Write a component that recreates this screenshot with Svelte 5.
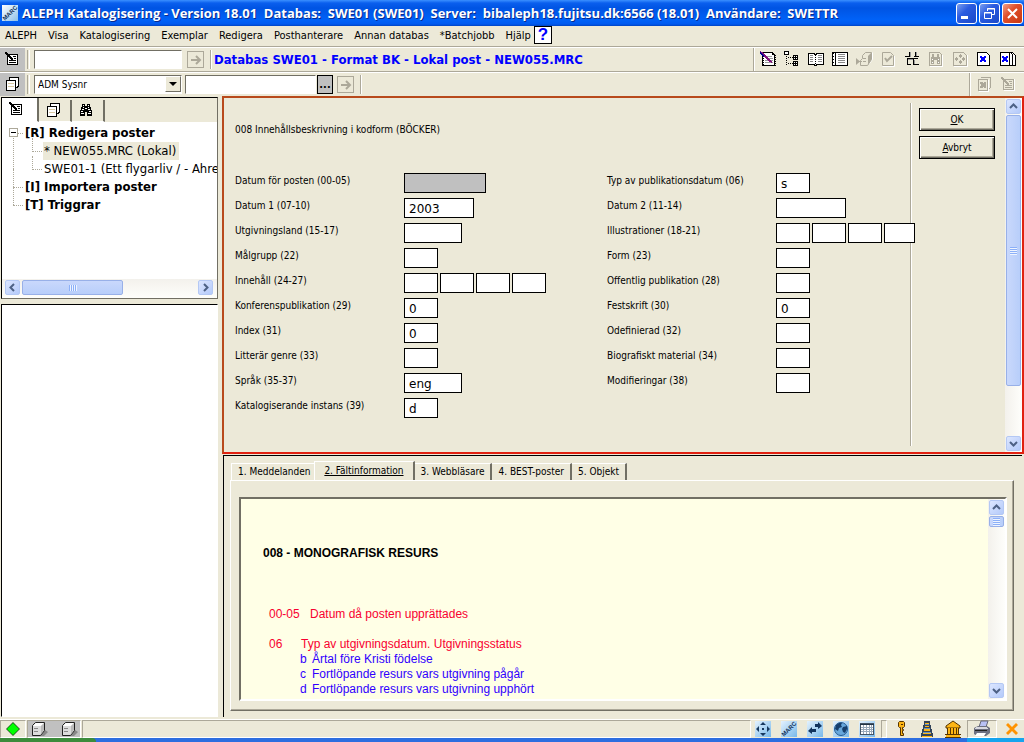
<script>
  const menus = ['ALEPH', 'Visa', 'Katalogisering', 'Exemplar', 'Redigera', 'Posthanterare', 'Annan databas', '*Batchjobb', 'Hjälp'];

  // Inner markup of the 18x18 toolbar and status icons
  const icons = {
    edit: `<path d="M4.5 4.5h10v10h-10z" fill="#fff" stroke="#000"/><path d="M2 2h2v1h1v1h1v1h1v1h1v1h1v1h1v2h-2v-1h-1v-1h-1v-1h-1v-1h-1v-1h-1v-1h-1v-1h-1z" fill="#000"/><path d="M10 6.500h3M11 8.500h2M6 10.500h7M6 12.500h7" stroke="#000"/>`,
    pages: `<path d="M6.5 5.5v-3h9v9h-1v1h-2" fill="#fff" stroke="#000"/><path d="M3.5 5.5h9v10h-9z" fill="#fff" stroke="#000"/><path d="M5 8.500h6M5 11.500h6" stroke="#d8c8a0"/>`,
    find: `<path d="M5 3h3v2h2V3h3v3h1v3h1v6h-5v-4H8v4H3V9h1V6h1z" fill="#000"/><path d="M6 4.500h1M11 4.500h1M6 6.500h1M11 6.500h1M5 8.500h2M11 8.500h2M8 7.500h2M4 10.500h2M12 10.500h2M4 12.500h3M11 12.500h3" stroke="#fff"/>`,
    editRed: `<path d="M3.5 2.5h10l2 2v11h-12z" fill="#fff" stroke="#000"/><path d="M3.5 2v14M15.5 5v11" stroke="#000" stroke-width="2" stroke-dasharray="1 1"/><path d="M13 3h2v2h-2z" fill="#000"/><path d="M8 6.500h5M9 8.500h5M6 10.500h8M6 12.500h8" stroke="#999"/><path d="M1 1.500l12 11" stroke="#80107c" stroke-width="2"/><path d="M1 2.500l4 4" stroke="#000090"/>`,
    tree: `<path d="M1.500 1.500h4v3h-4z" fill="#fff" stroke="#000"/><path d="M3.500 6v9M5 7.500h5M5 13.500h5" stroke="#000" stroke-dasharray="1 1" fill="none"/><path d="M10 5h5v5h-5zM10 11h5v5h-5z" fill="#000"/><path d="M11 6.500h1M13 6.500h1M11 8.500h1M13 8.500h1M11 12.500h1M13 12.500h1M11 14.500h1M13 14.500h1" stroke="#fff"/>`,
    book: `<path d="M1.500 3.500h5l2 1 2-1h6v11h-6l-2 1-2-1h-5z" fill="#fff" stroke="#000"/><path d="M8.500 5v11" stroke="#000" stroke-dasharray="1 1"/><path d="M3 5.500h3M3 7.500h3M3 9.500h3M3 11.500h3M11 5.500h4M11 7.500h4M11 9.500h4M11 11.500h4" stroke="#888"/>`,
    note: `<path d="M1.500 2.500h15v13h-15z" fill="#fff" stroke="#000"/><path d="M4.500 3v12" stroke="#000"/><path d="M2.500 3v12" stroke="#000" stroke-dasharray="1 2"/><path d="M7 4.500h7M7 6.500h7M7 8.500h7M7 10.500h7M7 12.500h7" stroke="#888"/>`,
    send: `<path d="M13.500 14.500l4-5v-7" stroke="#fff" fill="none"/><path d="M7.500 5.500l3-3h6v7l-4 6h-7v-5l2-2z" fill="#ece9d8" stroke="#aca899"/><path d="M13 6l3-3v7l-3 5z" fill="#aca899"/><path d="M8 8.500h3M8 11.500h3M2 11.500h5" stroke="#aca899"/><path d="M1 8l4 3.500-4 3.500z" fill="#aca899"/>`,
    check: `<path d="M3.500 2.500h8l3 3v10h-11z" fill="none" stroke="#aca899"/><path d="M15.500 6v10.500h-12" fill="none" stroke="#fff"/><path d="M6 8l2 3 5-5" fill="none" stroke="#aca899" stroke-width="2"/>`,
    split: `<path d="M6 2h1v5H6zM12 2h1v4h3v1h-5V6h1zM2 6h5v1H2zM4 8h11v1H5v6H4zM10 9h1v6h-1zM4 14h4v1H4zM10 14h6v1h-6z" fill="#000"/><path d="M7.500 2v5M5 9.500h5M13.500 2v4M11.500 10v4" stroke="#999"/>`,
    findDoc: `<path d="M2.500 2.500h10l2 2v11h-12z" fill="none" stroke="#aca899"/><path d="M15.500 5v11.500h-13" fill="none" stroke="#fff"/><path d="M5 4h2v3h3V4h2v3h1v7h-3v-4H7v4H4V7h1z" fill="#aca899"/><path d="M5 9.500h1M11 9.500h1M5 12.500h1M11 12.500h1" stroke="#fff"/>`,
    movDoc: `<path d="M2.500 2.500h10l3 3v10h-13z" fill="none" stroke="#aca899"/><path d="M16.500 5v11.500h-14" fill="none" stroke="#fff"/><path d="M9 4l2 2-2 2-2-2zM9 10l2 2-2 2-2-2zM5.500 7l2 2-2 2-2-2zM12.500 7l2 2-2 2-2-2z" fill="#aca899"/>`,
    close: `<path d="M2.500 2.500h9l3 3v10h-12z" fill="#fff" stroke="#000"/><path d="M5 6h2v1h2V6h2v2h-1v2h1v2H9v-1H7v1H5v-2h1V8H5z" fill="#00f"/>`,
    closeAll: `<path d="M7.500 2.500h6l3 3v10h-9z" fill="#fff" stroke="#000"/><path d="M4.500 2.500h7l2 2v11h-9z" fill="#fff" stroke="#000"/><path d="M1.500 2.500h8l1 1v12h-9z" fill="#fff" stroke="#000"/><path d="M3 6h2v1h2V6h2v2H8v2h1v2H7v-1H5v1H3v-2h1V8H3z" fill="#00f"/>`,
    closeGrey: `<path d="M6 2.500h9.500v10l-3 3M3.500 4.500h9v11h-9z" fill="none" stroke="#aca899"/><path d="M5 7h2l1 1 1-1h2v2l-1 1 1 1v2H9l-1-1-1 1H5v-2l1-1-1-1z" fill="#aca899"/><path d="M13.500 5v11.500h-10" stroke="#fff" fill="none"/>`,
    editGrey: `<path d="M4.500 4.500h10v10h-10z" fill="none" stroke="#aca899"/><path d="M15.500 4v11.500h-11" fill="none" stroke="#fff"/><path d="M2 2h2v1h1v1h1v1h1v1h1v1h1v1h1v2h-2v-1h-1v-1h-1v-1h-1v-1h-1v-1h-1v-1h-1v-1h-1z" fill="#aca899"/><path d="M10 6.500h3M11 8.500h2M6 10.500h7M6 12.500h7" stroke="#aca899"/>`,
    diamond: `<path d="M9 2l7 7-7 7-7-7z" fill="#205020"/><path d="M9 3l6 6-6 6-6-6z" fill="#0f0"/>`,
    cube: `<path d="M10 16h4l4-4-3-2z" fill="#888"/><path d="M2.500 5.500l3-3h9v8l-4 5h-8z" fill="#ddd" stroke="#222"/><path d="M4 5l2-2h8l-3 3H3z" fill="#fff"/><path d="M11 6l3-3v7l-3 4z" fill="#bbb"/><path d="M4 8.500h4M4 11.500h4" stroke="#888"/>`,
    key: `<path d="M7.500 1.500h4l1 1v4l-1 1h-1v2h1v1h-1v3h1v2h-3v-8h-1l-1-1v-4z" fill="#fdb515" stroke="#553300"/><path d="M9 4.500h2" stroke="#553300"/>`,
    tower: `<path d="M6 1h6v4h1v4h1v4h1v4H3v-4h1V9h1V5h1z" fill="#33445a"/><path d="M7 3h4M7 6.500h4M6 9.500h6M6 10.500h6M5 13.500h8M4 16.500h10" stroke="#fdb515"/><path d="M7 4.500h4M6 8.500h6M5 12.500h8" stroke="#6a94c0"/>`,
    bank: `<path d="M9 1l7 5v2H2V6z" fill="#fdb515" stroke="#553300"/><path d="M3 8h12v6H3z" fill="#553300"/><path d="M4 8h2v6H4zM7 8h2v6H7zM10 8h2v6h-2zM13 8h1v6h-1zM2 15h14v2H2z" fill="#fdb515"/><path d="M1 14.500h16M1 17.500h16" stroke="#553300"/>`,
    printer: `<path d="M6 7l2-6h7l-2 6z" fill="#b8c0f4" stroke="#667"/><path d="M1 8l4-2h9l3 2v5l-4 3H4l-3-2z" fill="#6d7080"/><path d="M3 7.500h11M2 8.500h13" stroke="#d8d8e0"/><path d="M4 13h9l-2 3H2z" fill="#fff"/><path d="M2 10.500h12" stroke="#222"/>`,
    cancel: `<path d="M3 5l2-2 4 4 4-4 2 2-4 4 4 4-2 2-4-4-4 4-2-2 4-4z" fill="#ff9300"/>`,
    move: `<path d="M9 2l3 3H6zM9 16l3-3H6zM2 9l3-3v6zM16 9l-3-3v6z" fill="#17385f"/><path d="M8 8h2v2H8z" fill="#17385f"/>`,
    swap: `<path d="M2 11l4-4v2h4v3H6v2zM16 6l-4-4v2H9v3h3v2z" fill="#12345e"/>`,
    globe: `<circle cx="9" cy="9" r="6.500" fill="#67a7dc" stroke="#245a92"/><path d="M4 5l3-2h3l-1 2 1 2-3 1-1 3-3-2zM11 7l4-1v3l-2 4-2-1-1-3z" fill="#173f6c"/>`,
    table: `<path d="M2.5 3.5h13v11h-13z" fill="#fff" stroke="#456"/><path d="M2 4.500h14" stroke="#234"/><path d="M3 7.500h12M3 9.500h12M3 11.500h12M5.500 5v9M8.500 5v9M11.500 5v9M13.500 5v9" stroke="#9ab"/>`,
    go: `<path d="M3 8h8M8 4l4 4-4 4" fill="none" stroke="#aca899" stroke-width="2"/>`
  };

  // These have slanted outlines and look ragged with hard pixel edges
  const smooth = ['cube', 'diamond', 'send', 'printer', 'key', 'bank', 'cancel', 'move', 'swap', 'globe', 'go', 'check'];

  const postTools = ['editRed', 'tree', 'book', 'note', 'send', 'check', 'split', 'findDoc', 'movDoc', 'close', 'closeAll'];
  const modules = ['move', 'marc', 'swap', 'globe', 'table'];

  const leftFields = [
    { label: 'Datum för posten (00-05)', boxes: [82], value: '', locked: true },
    { label: 'Datum 1 (07-10)', boxes: [70], value: '2003' },
    { label: 'Utgivningsland (15-17)', boxes: [58], value: '' },
    { label: 'Målgrupp (22)', boxes: [34], value: '' },
    { label: 'Innehåll (24-27)', boxes: [34, 34, 34, 34], value: '' },
    { label: 'Konferenspublikation (29)', boxes: [34], value: '0' },
    { label: 'Index (31)', boxes: [34], value: '0' },
    { label: 'Litterär genre (33)', boxes: [34], value: '' },
    { label: 'Språk (35-37)', boxes: [58], value: 'eng' },
    { label: 'Katalogiserande instans (39)', boxes: [34], value: 'd' }
  ];
  const rightFields = [
    { label: 'Typ av publikationsdatum (06)', boxes: [34], value: 's' },
    { label: 'Datum 2 (11-14)', boxes: [70], value: '' },
    { label: 'Illustrationer (18-21)', boxes: [34, 34, 34, 31], value: '' },
    { label: 'Form (23)', boxes: [34], value: '' },
    { label: 'Offentlig publikation (28)', boxes: [34], value: '' },
    { label: 'Festskrift (30)', boxes: [34], value: '0' },
    { label: 'Odefinierad (32)', boxes: [34], value: '' },
    { label: 'Biografiskt material (34)', boxes: [34], value: '' },
    { label: 'Modifieringar (38)', boxes: [34], value: '' }
  ];

  const infoTabs = ['1. Meddelanden', '2. Fältinformation', '3. Webbläsare', '4. BEST-poster', '5. Objekt'];
  let activeTab = $state(1);
  let leftTab = $state(0);

  const codes = [
    ['b', 'Årtal före Kristi födelse'],
    ['c', 'Fortlöpande resurs vars utgivning pågår'],
    ['d', 'Fortlöpande resurs vars utgivning upphört'],
    ['e', 'Exakt tidpunkt']
  ];
</script>

{#snippet icon(name)}
  <svg class="icon" class:smooth={smooth.includes(name)} width="18" height="18" viewBox="0 0 18 18" aria-hidden="true">
    {@html icons[name]}
  </svg>
{/snippet}

{#snippet marc()}
  <svg class="marc" width="16" height="16" viewBox="0 0 16 16" aria-hidden="true">
    <text x="8" y="10" transform="rotate(-45 8 8)">MARC</text>
  </svg>
{/snippet}

{#snippet arrow(dir)}
  <button class="sb-btn" aria-label={dir}>
    <svg class={dir} width="9" height="9" viewBox="0 0 9 9"><path d="M1 6l3.500-3.500L8 6" /></svg>
  </button>
{/snippet}

{#snippet fieldColumn(fields, side)}
  <div class="field-col">
    {#each fields as field, i}
      <div class="field">
        <label for="{side}{i}">{field.label}</label>
        {#each field.boxes as width, n}
          <input
            id={n === 0 ? `${side}${i}` : null}
            aria-label={n === 0 ? null : `${field.label} ${n + 1}`}
            class:locked={field.locked}
            disabled={field.locked}
            value={field.value}
            style="width: {width}px"
          />
        {/each}
      </div>
    {/each}
  </div>
{/snippet}

<div class="app">
  <header class="titlebar">
    <span class="logo">{@render marc()}</span>
    <h1>ALEPH Katalogisering - Version 18.01  Databas:  SWE01 (SWE01)  Server:  bibaleph18.fujitsu.dk:6566 (18.01)  Användare:  SWETTR</h1>
    <div class="win-buttons">
      <button aria-label="Minimera"><svg width="19" height="19" viewBox="0 0 19 19"><path d="M4 12h7v3H4z" fill="#fff" /></svg></button>
      <button aria-label="Återställ"><svg width="19" height="19" viewBox="0 0 19 19"><path d="M7.500 7V4.500h7v6H12M4.500 8.500h7v6h-7zM7 5h8M4 9h8" fill="none" stroke="#fff" /></svg></button>
      <button class="red" aria-label="Stäng"><svg width="19" height="19" viewBox="0 0 19 19"><path d="M5 5l9 9M14 5l-9 9" stroke="#fff" stroke-width="2" /></svg></button>
    </div>
  </header>

  <nav class="menubar">
    {#each menus as menu}
      <button>{menu}</button>
    {/each}
    <button class="help">?</button>
  </nav>

  <div class="toolbar">
    <button class="mode" aria-label="Redigera poster">{@render icon('edit')}</button>
    <span class="grip"></span>
    <input class="sunk find" aria-label="Post" />
    <button class="go" aria-label="Gå till post">{@render icon('go')}</button>
    <span class="sep"></span>
    <h2>Databas SWE01 - Format BK - Lokal post - NEW055.MRC</h2>
    <span class="sep push"></span>
    <div class="tools">
      {#each postTools as name}
        <button aria-label={name}>{@render icon(name)}</button>
      {/each}
    </div>
  </div>

  <div class="toolbar last">
    <button class="mode" aria-label="Exemplar">{@render icon('pages')}</button>
    <span class="grip"></span>
    <div class="select">
      <select class="sunk" aria-label="Sökfält">
        <option>ADM Sysnr</option>
      </select>
      <span class="drop"></span>
    </div>
    <input class="sunk number" aria-label="ADM Sysnr" />
    <button class="dots" aria-label="Lista">...</button>
    <button class="go" aria-label="Sök">{@render icon('go')}</button>
    <span class="sep"></span>
    <span class="sep push"></span>
    <div class="tools">
      <button aria-label="Stäng exemplar">{@render icon('closeGrey')}</button>
      <button aria-label="Redigera exemplar">{@render icon('editGrey')}</button>
    </div>
  </div>

  <main>
    <aside>
      <section class="navigator">
        <div class="nav-tabs">
          {#each ['edit', 'pages', 'find'] as name, i}
            <button class:active={leftTab === i} aria-label={name} onclick={() => (leftTab = i)}>{@render icon(name)}</button>
          {/each}
        </div>
        <ul class="tree">
          <li>
            <button class="toggle" aria-label="Fäll ihop"></button><b>[R] Redigera poster</b>
            <ul>
              <li><span class="selected">* NEW055.MRC (Lokal)</span></li>
              <li><span>SWE01-1 (Ett flygarliv / - Ahre</span></li>
            </ul>
          </li>
          <li><b>[I] Importera poster</b></li>
          <li><b>[T] Triggrar</b></li>
        </ul>
        <div class="scroll-x">
          {@render arrow('left')}
          <span class="thumb"></span>
          {@render arrow('right')}
        </div>
      </section>
      <section class="preview"></section>
    </aside>

    <div class="work">
      <form class="record">
        <div class="fields">
          <p>008 Innehållsbeskrivning i kodform (BÖCKER)</p>
          <div class="columns">
            {@render fieldColumn(leftFields, 'l')}
            {@render fieldColumn(rightFields, 'r')}
          </div>
        </div>
        <div class="actions">
          <button type="button"><u>O</u>K</button>
          <button type="button"><u>A</u>vbryt</button>
        </div>
        <div class="scroll-y tall">
          {@render arrow('up')}
          <span class="thumb"></span>
          {@render arrow('down')}
        </div>
      </form>

      <section class="info">
        <div class="info-tabs">
          {#each infoTabs as tab, i}
            <button class:active={activeTab === i} onclick={() => (activeTab = i)}>{tab}</button>
          {/each}
        </div>
        <div class="info-frame">
          <div class="info-box">
            <article>
              <h3>008 - MONOGRAFISK RESURS</h3>
              <p class="pos"><span class="wide">00-05</span>Datum då posten upprättades</p>
              <p class="pos"><span>06</span>Typ av utgivningsdatum. Utgivningsstatus</p>
              <dl>
                {#each codes as [code, text]}
                  <dt>{code}</dt>
                  <dd>{text}</dd>
                {/each}
              </dl>
            </article>
            <div class="scroll-y short">
              {@render arrow('up')}
              <span class="thumb"></span>
              {@render arrow('down')}
            </div>
          </div>
        </div>
      </section>
    </div>
  </main>

  <footer>
    <div class="status">
      <span class="pane">{@render icon('diamond')}</span>
      <span class="pane servers">{@render icon('cube')}{@render icon('cube')}</span>
      <span class="pane message"></span>
      <div class="modules">
        {#each modules as name}
          <button class="module" aria-label={name}>
            {#if name === 'marc'}{@render marc()}{:else}{@render icon(name)}{/if}
          </button>
        {/each}
      </div>
      <span class="pane tiny"></span>
      <div class="session">
        <button aria-label="Lösenord">{@render icon('key')}</button>
        <button aria-label="Torn">{@render icon('tower')}</button>
        <button aria-label="Bibliotek">{@render icon('bank')}</button>
      </div>
      <button class="pane print" aria-label="Skrivare">{@render icon('printer')}</button>
      <button class="cancel" aria-label="Avsluta">{@render icon('cancel')}</button>
    </div>
    <div class="taskbar"><span class="start"></span><span class="tray"></span></div>
  </footer>
</div>

<style>
  :global(body) {
    margin: 0;
    background: #ece9d8;
  }

  .app {
    display: flex;
    flex-direction: column;
    height: 100vh;
    overflow: hidden;
    font-family: 'DejaVu Sans Condensed', 'DejaVu Sans', Tahoma, sans-serif;
    font-size: 11px;
    color: #000;
    background: #ece9d8;
  }

  .app *, .app *::before, .app *::after {
    box-sizing: border-box;
  }

  h1, h2, h3, p, ul, dl, dd {
    margin: 0;
    padding: 0;
  }

  button, input, select {
    font: inherit;
    color: inherit;
    margin: 0;
    padding: 0;
    border: 0;
    border-radius: 0;
    background: none;
    outline: none;
  }

  .icon {
    display: block;
    flex: none;
    shape-rendering: crispEdges;
  }

  .icon.smooth {
    shape-rendering: auto;
  }

  .marc {
    display: block;
  }

  .marc text {
    font: bold 6px 'Liberation Sans', sans-serif;
    text-anchor: middle;
    fill: #16355c;
  }

  /* Title bar */
  .titlebar {
    display: flex;
    align-items: center;
    flex: none;
    height: 26px;
    padding: 0 1px 0 2px;
    background: linear-gradient(#3b90ff 0, #0a5fee 3px, #0054e3 8px, #0062f8 20px, #005af0 24px, #0044c4 26px);
  }

  .logo {
    width: 16px;
    height: 16px;
    background: linear-gradient(135deg, #fff, #8cc0e8);
  }

  h1 {
    flex: 1;
    padding-left: 4px;
    font: bold 13px 'Open Sans', 'Trebuchet MS', sans-serif;
    color: #fff;
    text-shadow: 1px 1px #0a2a8c;
    white-space: pre;
    overflow: hidden;
  }

  .win-buttons {
    display: flex;
    gap: 2px;
  }

  .win-buttons button {
    width: 21px;
    height: 21px;
    border: 1px solid #fff;
    border-radius: 3px;
    background: linear-gradient(135deg, #7b9ff0, #2a5be0 40%, #1a48c8);
  }

  .win-buttons .red {
    background: linear-gradient(135deg, #f0a088, #e0502c 40%, #c83810);
  }

  /* Menu */
  .menubar {
    display: flex;
    align-items: center;
    flex: none;
    gap: 11px;
    height: 21px;
    padding: 0 5px 2px;
    border-bottom: 1px solid #aca899;
  }

  .menubar .help {
    width: 18px;
    height: 18px;
    margin-left: -8px;
    border: 1px solid #000;
    background: #fff;
    font: bold 17px/16px 'Liberation Sans', sans-serif;
    color: #00f;
  }

  /* Toolbars */
  .toolbar {
    display: flex;
    align-items: center;
    flex: none;
    height: 25px;
    border-top: 1px solid #fff;
    border-bottom: 1px solid #aca899;
  }

  .toolbar.last {
    height: 24px;
    border-bottom: 0;
  }

  .mode {
    width: 25px;
    height: 100%;
    padding: 0 0 1px 3px;
    background: #c0c0c0;
  }

  .grip {
    width: 3px;
    height: 19px;
    margin: 0 4px 0 2px;
    border-left: 1px solid #aca899;
    border-right: 1px solid #fff;
  }

  .sunk {
    height: 19px;
    border: 1px solid;
    border-color: #716f64 #fff #fff #716f64;
    background: #fff;
  }

  .find {
    width: 148px;
  }

  .go {
    display: flex;
    width: 17px;
    height: 17px;
    margin: 0 6px 0 5px;
    border: 1px solid #aca899;
  }

  .sep {
    width: 2px;
    height: 19px;
    border-left: 1px solid #aca899;
    border-right: 1px solid #fff;
  }

  .push {
    height: 100%;
    margin-left: auto;
  }

  h2 {
    padding-left: 2px;
    font: bold 13px 'DejaVu Sans Condensed', sans-serif;
    color: #00f;
    white-space: nowrap;
  }

  .tools {
    display: flex;
    gap: 6px;
    padding: 0 7px 1px 4px;
  }

  .select {
    position: relative;
    margin-right: 3px;
  }

  .select select {
    display: block;
    width: 148px;
    padding-left: 3px;
    appearance: none;
    font-size: 10px;
  }

  .drop {
    position: absolute;
    top: 1px;
    right: 1px;
    width: 16px;
    height: 16px;
    border: 1px solid;
    border-color: #fff #716f64 #716f64 #fff;
    background: #ece9d8;
    pointer-events: none;
  }

  .drop::after {
    content: '';
    display: block;
    margin: 5px 3px;
    border: 4px solid transparent;
    border-top-color: #000;
    border-bottom: 0;
  }

  .number {
    width: 131px;
    margin-right: 1px;
  }

  .dots {
    width: 16px;
    height: 19px;
    margin-right: -1px;
    border: 1px solid #000;
    background: #c0c0c0;
    font-weight: bold;
    line-height: 12px;
  }

  /* Left side */
  main {
    display: flex;
    flex: 1;
    min-height: 0;
  }

  aside {
    display: flex;
    flex-direction: column;
    flex: none;
    gap: 5px;
    width: 222px;
    padding: 1px 4px 2px 1px;
  }

  .navigator {
    display: flex;
    flex-direction: column;
    height: 202px;
    border: 1px solid;
    border-color: #000 #716f64 #716f64 #000;
  }

  .nav-tabs {
    display: flex;
    height: 24px;
  }

  .nav-tabs button {
    width: 33px;
    margin-top: 2px;
    padding: 0 0 1px 5px;
    border-right: 2px solid #716f64;
    border-bottom: 1px solid #fff;
  }

  .nav-tabs button.active {
    width: 37px;
    margin-top: 0;
    background: #fff;
  }

  .tree {
    flex: 1;
    padding: 2px 2px 0 22px;
    overflow: hidden;
    background: #fff;
    list-style: none;
    font-size: 13px;
    line-height: 18px;
    white-space: nowrap;
  }

  .tree li {
    position: relative;
  }

  .tree li::before {
    content: '';
    position: absolute;
    top: 9px;
    left: -11px;
    width: 10px;
    border-top: 1px dotted #aca899;
  }

  .tree > li::after {
    content: '';
    position: absolute;
    top: -9px;
    left: -11px;
    height: 18px;
    border-left: 1px dotted #aca899;
  }

  .tree > li:first-child::after {
    top: 9px;
    height: 54px;
  }

  .tree ul {
    padding-left: 19px;
    list-style: none;
  }

  .tree ul li::after {
    content: '';
    position: absolute;
    top: -4px;
    left: -11px;
    height: 14px;
    border-left: 1px dotted #aca899;
  }

  .toggle {
    position: absolute;
    z-index: 1;
    top: 4px;
    left: -15px;
    width: 9px;
    height: 9px;
    border: 1px solid #aca899;
    background: linear-gradient(#000, #000) center / 5px 1px no-repeat #fff;
  }

  .tree b, .tree span {
    padding: 0 1px;
  }

  .tree .selected {
    display: inline-block;
    background: #ece9d8;
    padding-right: 3px;
  }

  .preview {
    flex: 1;
    border: 1px solid;
    border-color: #000 #fff #fff #000;
    background: #fff;
  }

  /* Scroll bars */
  .sb-btn {
    display: flex;
    align-items: center;
    justify-content: center;
    flex: none;
    width: 15px;
    height: 15px;
    border: 1px solid #b4c8f4;
    border-radius: 2px;
    background: linear-gradient(135deg, #dce6ff, #b4cafa);
  }

  .sb-btn path {
    fill: none;
    stroke: #4d6185;
    stroke-width: 2;
  }

  .left { transform: rotate(-90deg); }
  .right { transform: rotate(90deg); }
  .down { transform: rotate(180deg); }

  .scroll-x {
    display: flex;
    align-items: center;
    justify-content: space-between;
    height: 19px;
    padding: 0 4px 2px 3px;
    background: linear-gradient(#f3f1ec, #fefefb);
  }

  .thumb {
    border: 1px solid #98b0e8;
    border-radius: 2px;
  }

  .scroll-x .thumb {
    flex: 0 0 101px;
    height: 15px;
    margin: 0 auto 0 2px;
    background: repeating-linear-gradient(90deg, #8cb0f8 0 1px, #eef4ff 1px 2px) center / 8px 6px no-repeat, linear-gradient(#c9d8fc, #b8cefa);
  }

  .scroll-y {
    display: flex;
    flex-direction: column;
    align-items: center;
    flex: none;
    width: 17px;
    padding: 1px 0;
    background: linear-gradient(90deg, #f3f1ec, #fefefb);
  }

  .scroll-y .thumb {
    width: 15px;
    margin: 1px 0 auto;
    background: repeating-linear-gradient(#8cb0f8 0 1px, #eef4ff 1px 2px) center / 7px 8px no-repeat, linear-gradient(90deg, #c9d8fc, #b8cefa);
  }

  .tall .thumb {
    flex: 0 0 77%;
  }

  .short .thumb {
    flex: 0 0 11px;
  }

  /* Record form */
  .work {
    display: flex;
    flex-direction: column;
    flex: 1;
    min-width: 0;
  }

  .record {
    display: flex;
    flex: none;
    height: 358px;
    border: 2px solid #b84a1c;
    border-right-color: #e02010;
    border-bottom-color: #e02010;
    font-size: 10px;
  }

  .fields {
    position: relative;
    z-index: 1;
    flex: 1;
    min-width: 0;
    margin-right: -5px;
    padding: 25px 0 0 11px;
    line-height: 14px;
  }

  .columns {
    display: flex;
    padding-top: 36px;
  }

  .field-col {
    flex: 0 0 372px;
  }

  .field {
    display: flex;
    gap: 2px;
    height: 25px;
  }

  .field label {
    width: 167px;
    padding-top: 1px;
  }

  .field input {
    height: 20px;
    padding: 2px 4px 0;
    border: 1px solid #000;
    background: #fff;
    font-family: 'DejaVu Sans', sans-serif;
    font-size: 12px;
  }

  .field input.locked {
    background: #c0c0c0;
  }

  .actions {
    display: flex;
    flex-direction: column;
    gap: 5px;
    width: 95px;
    margin: 5px 0 6px;
    padding: 5px 10px 0 8px;
    border-left: 1px solid #aca899;
    box-shadow: inset 1px 0 #fff;
  }

  .actions button {
    height: 23px;
    border: 1px solid #000;
    box-shadow: inset 1px 1px #fff, inset -1px -1px #716f64, inset -2px -2px #aca899;
  }

  /* Field information */
  .info {
    display: flex;
    flex-direction: column;
    flex: 1;
    min-height: 0;
    margin: 1px 2px 2px 1px;
    padding: 5px 8px 6px 6px;
    border-top: 1px solid #000;
    border-left: 1px solid #000;
  }

  .info-tabs {
    display: flex;
    align-items: flex-end;
    height: 19px;
    padding-left: 1px;
  }

  .info-tabs button {
    height: 17px;
    padding: 0 6px 2px;
    border-top: 1px solid #fff;
    border-right: 2px solid #716f64;
    font-size: 10px;
    white-space: nowrap;
  }

  .info-tabs button:first-child {
    padding-right: 4px;
    border-right: 0;
    border-left: 1px solid #fff;
  }

  .info-tabs .active {
    height: 19px;
    padding: 0 9px 2px;
    border-left: 1px solid #fff;
    text-decoration: underline;
  }

  .info-frame {
    flex: 1;
    min-height: 0;
    padding: 16px 6px 9px 8px;
    border: 1px solid;
    border-color: #fff #716f64 #716f64 #fff;
    box-shadow: inset -1px -1px #aca899;
  }

  .info-box {
    display: flex;
    height: 100%;
    border: 2px solid;
    border-color: #716f64 #fff #fff #716f64;
    background: #ffffe6;
  }

  article {
    flex: 1;
    padding: 47px 0 0 22px;
    overflow: hidden;
    font: 12px/15px 'Liberation Sans', Arial, sans-serif;
  }

  h3 {
    padding-bottom: 46px;
    font-size: 12px;
  }

  .pos {
    display: flex;
    padding: 0 0 15px 6px;
    color: #f80030;
  }

  .pos span {
    width: 32px;
  }

  .pos .wide {
    width: 41px;
  }

  .pos + .pos {
    padding-bottom: 0;
  }

  dl {
    display: grid;
    grid-template-columns: 12px 1fr;
    padding-left: 37px;
    color: #3000ff;
  }

  /* Status bar */
  footer {
    flex: none;
  }

  .status {
    display: flex;
    align-items: center;
    height: 19px;
    padding-right: 3px;
    border-top: 1px solid #fff;
  }

  .pane {
    display: flex;
    align-items: center;
    justify-content: center;
    width: 26px;
    height: 18px;
    margin-right: 1px;
    border: 1px solid;
    border-color: #aca899 #fff #fff #aca899;
  }

  .servers {
    gap: 12px;
    width: 54px;
    background: #c0c0c0;
  }

  .message {
    flex: 1;
  }

  .modules {
    display: flex;
    gap: 10px;
    padding: 0 6px 0 3px;
  }

  .module {
    display: flex;
    align-items: center;
    justify-content: center;
    width: 16px;
    height: 16px;
    background: linear-gradient(135deg, #e4f2fe, #78b8ea);
  }

  .tiny {
    width: 6px;
  }

  .session {
    display: flex;
    gap: 8px;
    padding: 0 5px 0 4px;
  }

  .print {
    width: 30px;
    margin-right: 6px;
  }

  .taskbar {
    display: flex;
    justify-content: space-between;
    height: 4px;
    background: #2d6ee0;
  }

  .start {
    width: 96px;
    background: #3c8c3c;
    border-radius: 0 4px 0 0;
  }

  .tray {
    width: 57px;
    background: #16a4ee;
  }
</style>
